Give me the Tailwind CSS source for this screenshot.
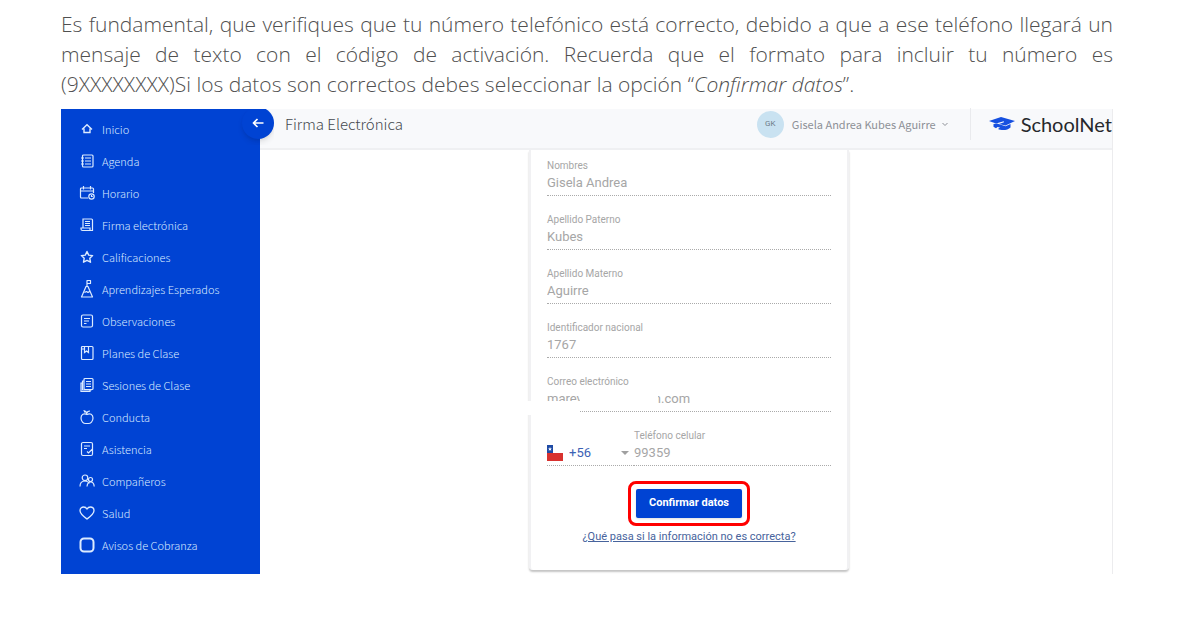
<!DOCTYPE html>
<html lang="es">
  <head>
    <meta charset="UTF-8" />
    <meta name="viewport" content="width=device-width, initial-scale=1.0" />
    <title>Firma Electrónica - SchoolNet</title>
    <script src="https://cdn.jsdelivr.net/npm/@tailwindcss/browser@4"></script>
  </head>

  <body class="bg-white pl-[61px] pr-[90px] pt-[9px] pb-12">
    <p class="mb-[10px] text-justify font-['Open_Sans',sans-serif] text-[21px] leading-[30px] font-light text-[#505050]">
      <span class="block [text-align-last:justify]">Es fundamental, que verifiques que tu número telefónico está correcto, debido a que a ese teléfono llegará un</span>
      <span class="block [text-align-last:justify]">mensaje de texto con el código de activación. Recuerda que el formato para incluir tu número es</span>
      <span class="block">(9XXXXXXXX)Si los datos son correctos debes seleccionar la opción “<em>Confirmar datos</em>”.</span>
    </p>

    <div class="flex font-['Noto_Sans_CJK_SC','Noto_Sans',sans-serif]">
      <!-- Sidebar -->
      <aside class="relative w-[199px] shrink-0 bg-[#0043d3] pt-1 pb-[13px] text-[11px] font-light text-[#dcebff]">
        <div class="absolute -right-[14px] top-0 z-10 h-9 w-10 overflow-hidden">
          <button type="button" aria-label="Cerrar menú" class="-mt-[2px] ml-auto flex h-8 w-8 items-center justify-center rounded-full bg-[#0043d3] text-white shadow-md">
            <svg class="h-3 w-3" viewBox="0 0 12 12" fill="none" stroke="currentColor" stroke-width="1.6"><path d="M11.5 6H1.5M5.5 2L1.5 6l4 4" /></svg>
          </button>
        </div>
        <nav class="flex flex-col">
          <a href="#" class="flex h-8 items-center gap-[7px] pl-[18px]">
            <svg class="h-4 w-4" viewBox="0 0 16 16" fill="none" stroke="currentColor" stroke-width="1.4"><path d="M3 8.500L8 3.800l5 4.700M5 7.500v4h6v-4" /></svg>
            Inicio
          </a>
          <a href="#" class="flex h-8 items-center gap-[7px] pl-[18px]">
            <svg class="h-4 w-4" viewBox="0 0 16 16" fill="none" stroke="currentColor" stroke-width="1.2"><rect x="3.500" y="2" width="10.500" height="12" rx="1" /><path d="M6 5h6M6 8h6M6 11h6M2 5h3M2 8h3M2 11h3" /></svg>
            Agenda
          </a>
          <a href="#" class="flex h-8 items-center gap-[7px] pl-[18px]">
            <svg class="h-4 w-4" viewBox="0 0 16 16" fill="none" stroke="currentColor" stroke-width="1.2"><path d="M9 13H2.500a1 1 0 0 1-1-1V4a1 1 0 0 1 1-1h11a1 1 0 0 1 1 1v4M1.500 6h13M4.500 1v3.500M11.500 1v3.500" /><circle cx="12.500" cy="11.500" r="2.700" /><path d="M12.500 10v1.500h1.300" /></svg>
            Horario
          </a>
          <a href="#" class="flex h-8 items-center gap-[7px] pl-[18px]">
            <svg class="h-4 w-4" viewBox="0 0 16 16" fill="none" stroke="currentColor" stroke-width="1.2"><path d="M4 11V2h8.500a1 1 0 0 1 1 1v10.500H3.500a1.500 1.500 0 0 1-1.500-1.500v-1h9v2.500M6 4.500h5M6 6.500h5M6 8.500h5" /></svg>
            Firma electrónica
          </a>
          <a href="#" class="flex h-8 items-center gap-[7px] pl-[18px]">
            <svg class="h-4 w-4" viewBox="0 0 16 16" fill="none" stroke="currentColor" stroke-width="1.4" stroke-linejoin="round"><path d="M8 2.500l1.700 3.600 3.900.5-2.800 2.700.7 3.900L8 11.300l-3.500 1.900.7-3.900-2.800-2.700 3.900-.5z" /></svg>
            Calificaciones
          </a>
          <a href="#" class="flex h-8 items-center gap-[7px] pl-[18px]">
            <svg class="h-5 w-4" viewBox="0 0 16 20" fill="none" stroke="currentColor" stroke-width="1.2" stroke-linejoin="round"><path d="M8 7.500V1.500h3.500v3H8M7 7.500h2l4.500 10.500h-11zM5.500 13.500l2-1 1.500 1 1.500-1" /></svg>
            Aprendizajes Esperados
          </a>
          <a href="#" class="flex h-8 items-center gap-[7px] pl-[18px]">
            <svg class="h-4 w-4" viewBox="0 0 16 16" fill="none" stroke="currentColor" stroke-width="1.2"><rect x="2.500" y="2" width="11" height="12" rx="1.500" /><path d="M5 5.500h6M5 8h5M5 10.500h2.500" /></svg>
            Observaciones
          </a>
          <a href="#" class="flex h-8 items-center gap-[7px] pl-[18px]">
            <svg class="h-4 w-4" viewBox="0 0 16 16" fill="none" stroke="currentColor" stroke-width="1.2"><rect x="2.500" y="1.500" width="11.500" height="13" rx="1" /><path d="M5.500 1.500v6l2-1.500 2 1.500v-6M2.500 4h3" /></svg>
            Planes de Clase
          </a>
          <a href="#" class="flex h-8 items-center gap-[7px] pl-[18px]">
            <svg class="h-4 w-4" viewBox="0 0 16 16" fill="none" stroke="currentColor" stroke-width="1.2"><rect x="5" y="1.500" width="9" height="11" rx="1" /><path d="M7 4.500h5M7 7h5M7 9.500h5M5 4H3.500v9h8.500v-.5M3.500 6H2v8.500h9V13" /></svg>
            Sesiones de Clase
          </a>
          <a href="#" class="flex h-8 items-center gap-[7px] pl-[18px]">
            <svg class="h-4 w-4" viewBox="0 0 16 16" fill="none" stroke="currentColor" stroke-width="1.2"><path d="M8 5.500C5 3.800 2 5.500 2 9s2.500 5.500 4.500 5.500h3C11.500 14.500 14 12.500 14 9s-3-5.200-6-3.500zM8 5.500C7.800 3.500 6.500 2 4.500 1.500M8 4c.3-1.500 1.500-2 3-2M5 3h4" /></svg>
            Conducta
          </a>
          <a href="#" class="flex h-8 items-center gap-[7px] pl-[18px]">
            <svg class="h-4 w-4" viewBox="0 0 16 16" fill="none" stroke="currentColor" stroke-width="1.2"><path d="M13.500 8V3A1.500 1.500 0 0 0 12 1.500H4A1.500 1.500 0 0 0 2.500 3v10A1.500 1.500 0 0 0 4 14.500h8a1.500 1.500 0 0 0 1.500-1.500V8M5 5h6M5 7.500h3M8 10.500l1.500 1.500 4-4" /></svg>
            Asistencia
          </a>
          <a href="#" class="flex h-8 items-center gap-[7px] pl-[18px]">
            <svg class="h-4 w-4" viewBox="0 0 16 16" fill="none" stroke="currentColor" stroke-width="1.2"><circle cx="6" cy="4.800" r="2.800" /><path d="M1 13.500c0-3.500 2-5.500 5-5.500 2 0 3.500 1 4.300 2.500" /><circle cx="11.500" cy="6.500" r="2" /><path d="M8 13.500c.3-3 1.700-4.500 3.700-4.500s3.300 1.500 3.500 4.500" /></svg>
            Compañeros
          </a>
          <a href="#" class="flex h-8 items-center gap-[7px] pl-[18px]">
            <svg class="h-4 w-4" viewBox="0 0 16 16" fill="none" stroke="currentColor" stroke-width="1.3"><path d="M8 14C4 11 1 8.800 1 5.700 1 3.500 2.700 2 4.600 2 6 2 7.300 2.800 8 4c.7-1.200 2-2 3.400-2C13.300 2 15 3.500 15 5.700 15 8.800 12 11 8 14z" /></svg>
            Salud
          </a>
          <a href="#" class="flex h-8 items-center gap-[7px] pl-[18px]">
            <svg class="h-4 w-4" viewBox="0 0 16 16" fill="none" stroke="currentColor" stroke-width="2"><rect x="1.500" y="1.500" width="13" height="13" rx="3.500" /></svg>
            Avisos de Cobranza
          </a>
        </nav>
      </aside>

      <div class="flex min-w-0 flex-1 flex-col border-r border-[#ececee]">
        <!-- Top bar -->
        <header class="flex h-[41px] shrink-0 items-center border-b-2 border-[#eff0f2] bg-[#f8f9fb] pb-[9px] pl-[25px]">
          <h1 class="text-[15px] font-light text-[#45494f]">Firma Electrónica</h1>
          <button type="button" class="ml-auto flex items-center gap-2 pr-[22px] text-[11px] text-[#8d9096]">
            <span class="flex h-[27px] w-[27px] items-center justify-center rounded-full bg-[#c9e2f1] font-['Roboto',sans-serif] text-[8px] text-[#6d7b88]">GK</span>
            <span class="flex items-center gap-[6px]">
              Gisela Andrea Kubes Aguirre
              <svg class="h-[6px] w-[6px]" viewBox="0 0 6 6" fill="none" stroke="currentColor"><path d="M.5 2L3 4.500 5.500 2" /></svg>
            </span>
          </button>
          <a href="#" class="flex h-8 items-center gap-[6px] border-l border-[#e9eaed] pl-[18px] font-['Lato',sans-serif] text-[20px] text-[#26282c]">
            <svg class="h-4 w-[26px]" viewBox="0 0 26 16" fill="#1650e0"><path d="M0 5L12 1l14 4-9.500 4.500-6.500-1.500 5-1.800-.3-.9-7.700 2.200z" /><path d="M4.500 8l3.500-.5 8.500 2.800 5-2.300v3.500c-2.500 2.800-9 3.300-12.500 1.500l2-1.500-2.500-.5-1.500 1.300-2.500-1.500z" /></svg>
            SchoolNet
          </a>
        </header>

        <!-- Card -->
        <main class="flex-1 pl-[269px]">
          <form class="relative w-80 rounded-b-sm border-x-2 border-[#f1f1f3] px-4 pt-[9px] pb-[25px] font-['Roboto',sans-serif] text-[#a6a6a6] shadow-[0_2px_2px_#c4c4c4]" onsubmit="return false;">
            <div class="flex h-[54px] flex-col">
              <label for="nombres" class="text-[10px] leading-[14px]">Nombres</label>
              <input id="nombres" type="text" value="Gisela Andrea" readonly class="h-[23px] w-full border-b border-dotted border-[#aaaaaa] pb-1 text-[13px] outline-none" />
            </div>
            <div class="flex h-[54px] flex-col">
              <label for="paterno" class="text-[10px] leading-[14px]">Apellido Paterno</label>
              <input id="paterno" type="text" value="Kubes" readonly class="h-[23px] w-full border-b border-dotted border-[#aaaaaa] pb-1 text-[13px] outline-none" />
            </div>
            <div class="flex h-[54px] flex-col">
              <label for="materno" class="text-[10px] leading-[14px]">Apellido Materno</label>
              <input id="materno" type="text" value="Aguirre" readonly class="h-[23px] w-full border-b border-dotted border-[#aaaaaa] pb-1 text-[13px] outline-none" />
            </div>
            <div class="flex h-[54px] flex-col">
              <label for="identificador" class="text-[10px] leading-[14px]">Identificador nacional</label>
              <input id="identificador" type="text" value="1767" readonly class="h-[23px] w-full border-b border-dotted border-[#aaaaaa] pb-1 text-[13px] outline-none" />
            </div>
            <div class="relative flex h-[54px] flex-col">
              <label for="correo" class="text-[10px] leading-[14px]">Correo electrónico</label>
              <input id="correo" type="text" value="marev                      n.com" readonly class="h-[23px] w-full border-b border-dotted border-[#aaaaaa] pb-1 text-[13px] outline-none" />
              <!-- hides the private part of the address -->
              <span class="absolute -left-5 top-[26px] h-[14px] w-[53px] bg-white"></span>
              <span class="absolute left-[33px] top-[14px] h-[20px] w-[78px] bg-white"></span>
            </div>
            <div class="flex h-[54px]">
              <div class="relative mt-[14px] h-[23px] w-[87px] border-b border-dotted border-[#aaaaaa]">
                <svg class="absolute left-0 top-[2px] h-4 w-4" viewBox="0 0 16 16"><path fill="#fff" d="M0 0h16v8H0z" /><path fill="#d8322f" d="M0 8h16v8H0z" /><path fill="#1f4ba5" d="M0 0h6v8H0z" /><path fill="#fff" d="M3 2l.6 1.400H5L3.900 4.300l.4 1.500L3 4.900l-1.300.9.400-1.500L1 3.400h1.400z" /></svg>
                <select aria-label="Código de país" class="block h-[19px] w-full appearance-none pl-[22px] text-[13px] leading-[19px] text-[#3c62b5] outline-none">
                  <option>+56</option>
                </select>
                <svg class="pointer-events-none absolute right-[5px] top-2 h-1 w-2" viewBox="0 0 8 4" fill="#a0a0a0"><path d="M0 0h8L4 4z" /></svg>
              </div>
              <div class="flex flex-1 flex-col">
                <label for="telefono" class="text-[10px] leading-[14px]">Teléfono celular</label>
                <input id="telefono" type="tel" value="99359" readonly class="h-[23px] w-full border-b border-dotted border-[#aaaaaa] pb-1 text-[13px] outline-none" />
              </div>
            </div>
            <div class="flex flex-col items-center">
              <div class="-mt-[2px] rounded-lg border-3 border-[#ff0000] p-[5px]">
                <button type="submit" class="block h-[29px] w-[106px] rounded-xs bg-[#0043d3] text-[11px] font-bold text-white shadow">Confirmar datos</button>
              </div>
              <a href="#" class="mt-[3px] text-[11px] leading-4 text-[#47639c] underline">¿Qué pasa si la información no es correcta?</a>
            </div>
          </form>
        </main>
      </div>
    </div>
  </body>
</html>
